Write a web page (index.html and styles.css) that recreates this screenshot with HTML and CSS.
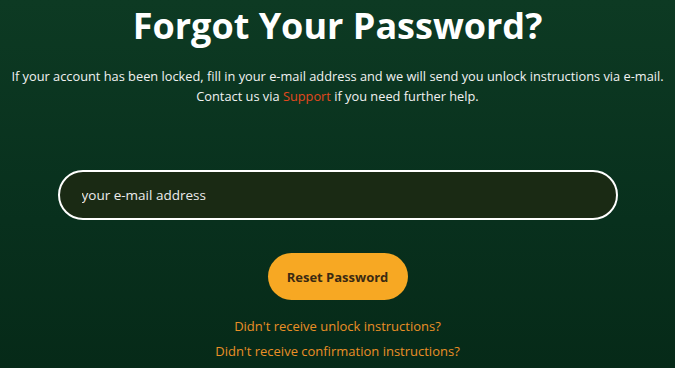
FILE: index.html
```html
<!DOCTYPE html>
<html lang="en">
<head>
<meta charset="utf-8">
<title>Forgot Your Password?</title>
<link rel="stylesheet" href="styles.css">
</head>
<body>
<main class="page">
  <h1 class="title">Forgot Your Password?</h1>
  <p class="intro">If your account has been locked, fill in your e-mail address and we will send you unlock instructions via e-mail.<br>Contact us via <a class="support" href="#">Support</a> if you need further help.</p>
  <form class="form">
    <input class="email" type="email" placeholder="your e-mail address">
    <button class="submit" type="button">Reset Password</button>
  </form>
  <nav class="links">
    <a href="#">Didn't receive unlock instructions?</a>
    <a href="#">Didn't receive confirmation instructions?</a>
  </nav>
</main>
</body>
</html>
```
FILE: styles.css
```css
html, body {
  margin: 0;
  height: 100%;
}
body {
  background: linear-gradient(180deg, #0d3a23 0%, #08301d 60%, #062a18 100%);
  font-family: "Open Sans", "Noto Sans", sans-serif;
  color: #f2f2f2;
  overflow: hidden;
}
.page {
  display: flex;
  flex-direction: column;
  align-items: center;
  padding-top: 2px;
}
.title {
  margin: 0;
  font-size: 36px;
  font-weight: 700;
  line-height: 48px;
  color: #ffffff;
  letter-spacing: 0;
}
.intro {
  margin: 16px 0 0;
  font-size: 12.8px;
  line-height: 20px;
  text-align: center;
}
.support {
  color: #e2481e;
  text-decoration: none;
}
.form {
  display: flex;
  flex-direction: column;
  align-items: center;
  margin-top: 64px;
  gap: 33px;
}
.email {
  box-sizing: border-box;
  width: 560px;
  height: 50px;
  border: 2px solid #ffffff;
  border-radius: 25px;
  background: #1a2a14;
  padding: 0 22px;
  font-family: inherit;
  font-size: 13.5px;
  color: #f2f2f2;
  outline: none;
}
.email::placeholder {
  color: #ececec;
  opacity: 1;
}
.submit {
  width: 140px;
  height: 47px;
  border: 0;
  border-radius: 24px;
  background: #f7a823;
  color: #3b2a12;
  font-family: inherit;
  font-weight: 700;
  font-size: 13px;
}
.links {
  display: flex;
  flex-direction: column;
  align-items: center;
  margin-top: 16px;
  gap: 5px;
}
.links a {
  color: #ea8f26;
  text-decoration: none;
  font-size: 13px;
  line-height: 20px;
}
```
